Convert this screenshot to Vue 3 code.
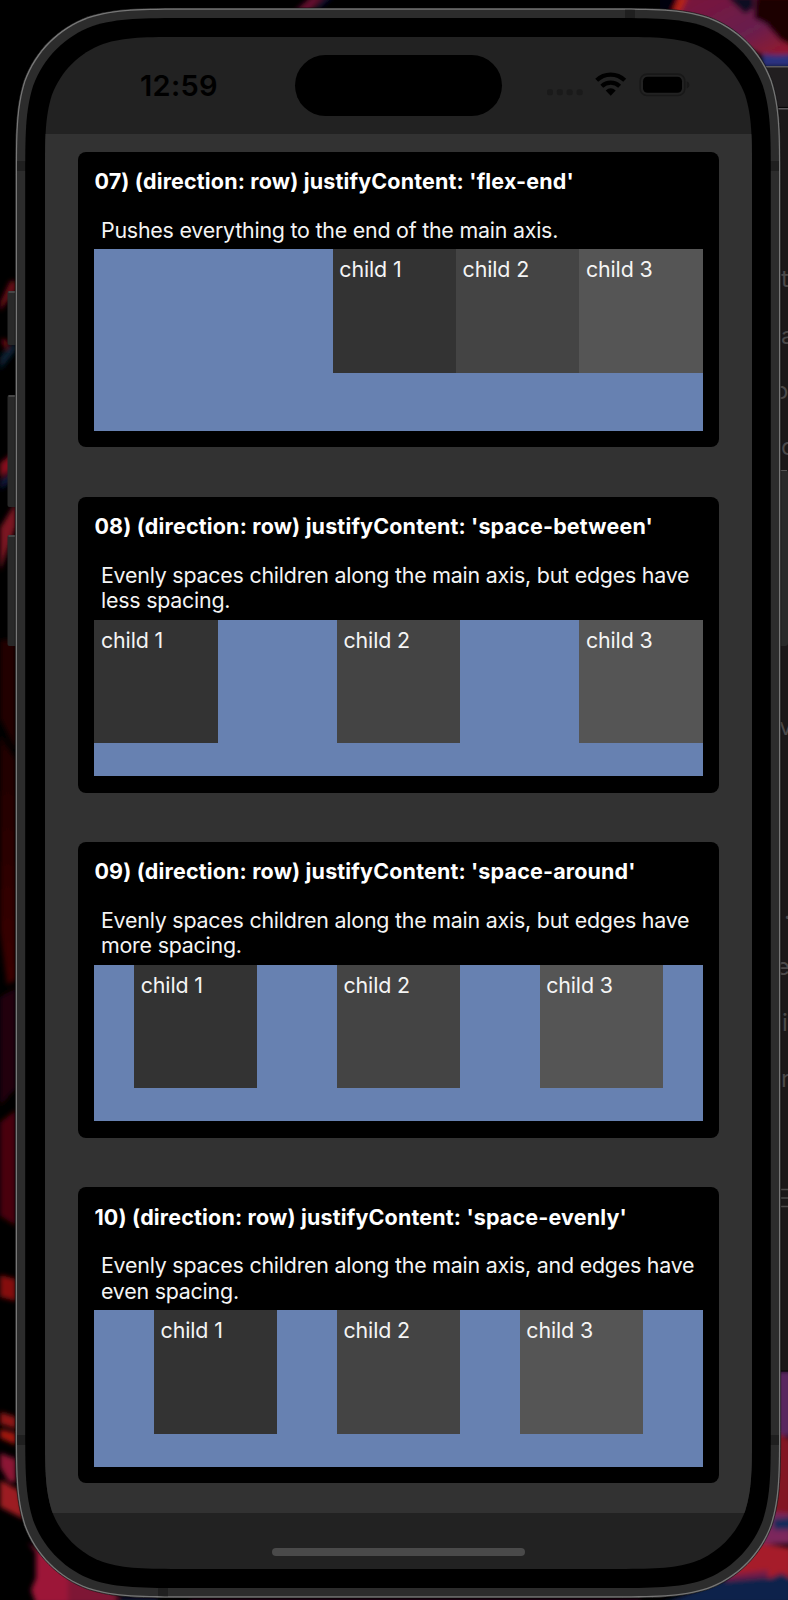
<script setup>
const examples = [
  { title: "07) (direction: row) justifyContent: 'flex-end'", lines: ['Pushes everything to the end of the main axis.'], justify: 'end' },
  { title: "08) (direction: row) justifyContent: 'space-between'", lines: ['Evenly spaces children along the main axis, but edges have', 'less spacing.'], justify: 'between' },
  { title: "09) (direction: row) justifyContent: 'space-around'", lines: ['Evenly spaces children along the main axis, but edges have', 'more spacing.'], justify: 'around' },
  { title: "10) (direction: row) justifyContent: 'space-evenly'", lines: ['Evenly spaces children along the main axis, and edges have', 'even spacing.'], justify: 'evenly' },
]

// Rectangle with continuous-curvature corners.
function smoothRect(x1, y1, x2, y2, r) {
  const a = 1.528665 * r, b = 1.088493 * r, c = 0.868407 * r
  const d = 0.631494 * r, e = 0.074911 * r, f = 0.372824 * r, g = 0.16906 * r
  return `M${x1 + a} ${y1}L${x2 - a} ${y1}` +
    `C${x2 - b} ${y1} ${x2 - c} ${y1} ${x2 - d} ${y1 + e}C${x2 - f} ${y1 + g} ${x2 - g} ${y1 + f} ${x2 - e} ${y1 + d}C${x2} ${y1 + c} ${x2} ${y1 + b} ${x2} ${y1 + a}` +
    `L${x2} ${y2 - a}C${x2} ${y2 - b} ${x2} ${y2 - c} ${x2 - e} ${y2 - d}C${x2 - g} ${y2 - f} ${x2 - f} ${y2 - g} ${x2 - d} ${y2 - e}C${x2 - c} ${y2} ${x2 - b} ${y2} ${x2 - a} ${y2}` +
    `L${x1 + a} ${y2}C${x1 + b} ${y2} ${x1 + c} ${y2} ${x1 + d} ${y2 - e}C${x1 + f} ${y2 - g} ${x1 + g} ${y2 - f} ${x1 + e} ${y2 - d}C${x1} ${y2 - c} ${x1} ${y2 - b} ${x1} ${y2 - a}` +
    `L${x1} ${y1 + a}C${x1} ${y1 + b} ${x1} ${y1 + c} ${x1 + e} ${y1 + d}C${x1 + g} ${y1 + f} ${x1 + f} ${y1 + g} ${x1 + d} ${y1 + e}C${x1 + c} ${y1} ${x1 + b} ${y1} ${x1 + a} ${y1}Z`
}
const outer = smoothRect(15.3, 8, 780.7, 1598, 115)
const body = smoothRect(17, 9.7, 779, 1596.3, 113.5)
const bezel = smoothRect(25.2, 18, 770.8, 1588, 107)
const glass = smoothRect(45, 37, 752, 1569, 92)
</script>

<template>
  <div class="desktop">
    <svg class="backdrop" width="788" height="1600" viewBox="0 0 788 1600" aria-hidden="true">
      <defs>
        <filter id="soft" x="-20%" y="-20%" width="140%" height="140%"><feGaussianBlur stdDeviation="2.4" /></filter>
        <linearGradient id="rose" x1="0" y1="0" x2="1" y2="1"><stop offset="0" stop-color="#7c1238" /><stop offset=".6" stop-color="#68204e" /><stop offset="1" stop-color="#a01523" /></linearGradient>
        <linearGradient id="ember" x1="0" y1="0" x2="0" y2="1"><stop offset="0" stop-color="#1e0002" /><stop offset=".5" stop-color="#2c0003" /><stop offset="1" stop-color="#3c0204" /></linearGradient>
        <clipPath id="glassClip"><path :d="glass" /></clipPath>
        <clipPath id="bodyClip"><path :d="body" /></clipPath>
      </defs>
      <rect width="788" height="1600" fill="#000" />
      <g filter="url(#soft)">
        <path d="M294 12L312 -4H325L309 12Z" fill="#64102f" />
        <path d="M312 12L326 -4H334L320 8Z" fill="#0b1036" />
        <path d="M674 -5H792V60H772L730 40L674 14Z" fill="url(#rose)" />
        <path d="M660 -5H678L674 12H660Z" fill="#050208" />
        <path d="M672 12L680 -4L688 -3L681 12Z" fill="#b62213" />
        <path d="M727 -4H754V8L745 14L733 3Z" fill="#070b20" />
        <path d="M756 -4H792V46L780 40L766 24L754 18Z" fill="#1c0203" />
        <path d="M762 54L776 55L792 54V67H762Z" fill="#2b3380" />
        <path d="M0 303L10 281H16V290L0 311Z" fill="#6a0a17" />
        <path d="M0 357L9 347L16 342V350L0 370Z" fill="#092034" />
        <path d="M1 339L8 341L6 350Z" fill="#920e19" />
        <path d="M0 463L16 451V468L0 477Z" fill="#86111e" />
        <path d="M0 480L16 469V478L0 490Z" fill="#0b1238" />
        <path d="M0 528L16 502V526L0 571Z" fill="#7b1520" />
        <path d="M0 640H16V750L0 718Z" fill="#240002" />
        <path d="M0 735L16 760V980L7 985L0 930Z" fill="url(#ember)" />
        <path d="M0 997L16 988V1088L0 1106Z" fill="#24020e" />
        <path d="M0 1122L16 1110V1226L0 1216Z" fill="#4a0407" />
        <path d="M0 1275L16 1279V1301L0 1297Z" fill="#850f0e" />
        <path d="M0 1412L16 1417V1429L0 1424Z" fill="#8f1619" />
        <path d="M0 1429L16 1433V1445L0 1438Z" fill="#a2180e" />
        <path d="M0 1453L16 1459V1482L9 1482L0 1467Z" fill="#8c1434" />
        <path d="M0 1480L19 1490L24 1519L0 1507Z" fill="#9c1a20" />
        <path d="M28 1543L35 1547L72 1567L119 1597L111 1604H36L31 1590L36 1578V1552Z" fill="#9c1839" />
        <path d="M68 1563L119 1596L115 1604H68Z" fill="#7e1735" />
        <path d="M119 1597H158V1604H119Z" fill="#0b1230" />
        <path d="M190 1599H640V1604H190Z" fill="#30051f" />
        <path d="M774 1371H792V1436H774Z" fill="#59285f" />
        <path d="M776 1432L792 1440V1514H771Z" fill="#821722" />
        <path d="M764 1511L792 1514V1544H760Z" fill="#7c285c" />
        <path d="M772 1519L792 1517V1530L774 1530Z" fill="#192b5a" />
        <path d="M754 1542L792 1548V1580L720 1576Z" fill="#a61e2a" />
        <path d="M726 1579L752 1575L770 1578L782 1573L792 1579V1604H660Z" fill="#10204c" />
        <path d="M728 1575L768 1570V1577L724 1581Z" fill="#721c46" />
      </g>
      <rect x="750" y="66" width="40" height="1305" fill="#1b1819" />
      <rect x="750" y="66" width="40" height="42" fill="#211e20" />
      <path d="M750 66.8H788M750 108.7H788" stroke="#5c595c" stroke-width="1.5" />
      <path d="M750 107.4H788M750 1371H788" stroke="#050505" stroke-width="1" />
      <rect x="760" y="470" width="28" height="176" rx="3" fill="#292a2a" />
      <path d="M770 470.5H787" stroke="#555" />
      <g class="behind">
        <text x="781" y="287">t</text><text x="781" y="344">a</text><text x="774" y="399">o</text><text x="781" y="455">c</text>
        <text x="779" y="735">v</text><text x="784" y="919">.</text><text x="776" y="975">e</text><text x="782" y="1031">i</text><text x="781" y="1087">r</text>
      </g>
      <path d="M781 1189.5H788M781 1198H788M781 1206.5H788" stroke="#4b494a" stroke-width="1.7" />

      <g fill="#292929">
        <rect x="7.5" y="291" width="14" height="54" rx="2" />
        <rect x="7.5" y="395" width="14" height="112" rx="2" />
        <rect x="7.5" y="535" width="14" height="111" rx="2" />
      </g>
      <path d="M8.5 292H15M8.5 396H15M8.5 536H15" stroke="#505050" stroke-width="1.4" />

      <path :d="outer" fill="#777" stroke="#050505" stroke-width=".6" />
      <path :d="body" fill="#2c2c2c" />
      <g clip-path="url(#bodyClip)" fill="#1f1f1f">
        <rect x="17" y="161" width="762" height="10" />
        <rect x="17" y="1435" width="762" height="10" />
        <rect x="625" y="9" width="10" height="12" />
        <rect x="158" y="1586" width="10" height="12" />
      </g>
      <path :d="bezel" fill="#000" />
      <g clip-path="url(#glassClip)">
        <rect x="45" y="37" width="707" height="1532" fill="#222" />
        <rect x="45" y="134" width="707" height="1379" fill="#323232" />
      </g>
    </svg>

    <main class="screen">
      <header class="status">
        <span class="time">12:59</span>
        <span class="island"></span>
        <span class="icons">
          <svg width="142" height="28" viewBox="0 0 142 28" aria-hidden="true">
            <g fill="#1a1a1a">
              <rect x="0" y="18.2" width="6" height="6" rx="2" /><rect x="9.8" y="18.2" width="6" height="6" rx="2" />
              <rect x="19.6" y="18.2" width="6" height="6" rx="2" /><rect x="29.6" y="18.2" width="6" height="6" rx="2" />
            </g>
            <g fill="none" stroke="#000" stroke-width="4.2">
              <path d="M49.7 9.3A20 20 0 0 1 77.7 9.3" />
              <path d="M54.8 15.2A13 13 0 0 1 72.6 15.2" />
            </g>
            <path d="M58.7 19.5Q63.7 15.2 68.7 19.5L63.7 24.8Z" fill="#000" />
            <rect x="93.2" y="3.1" width="44.6" height="21.4" rx="6.8" fill="none" stroke="#181818" stroke-width="1.6" />
            <rect x="96" y="5.8" width="39" height="16" rx="4.5" fill="#000" />
            <path d="M139.7 10.2Q142.5 11.3 142.5 14T139.7 17.6Z" fill="#181818" />
          </svg>
        </span>
      </header>

      <div class="list">
        <section v-for="ex in examples" :key="ex.title" class="card">
          <h2>{{ ex.title }}</h2>
          <p><span v-for="line in ex.lines" :key="line">{{ line }}</span></p>
          <div class="box" :class="ex.justify">
            <div v-for="n in 3" :key="n" class="child" :class="'tone' + n">child {{ n }}</div>
          </div>
        </section>
      </div>

      <footer><span class="indicator"></span></footer>
    </main>
  </div>
</template>

<style>
html, body { margin: 0; background: #000; }
</style>

<style scoped>
.desktop {
  position: relative;
  width: 788px;
  height: 1600px;
  overflow: hidden;
  box-sizing: border-box;
  padding: 37px 36px 31px 45px;
  font-family: Inter, "Liberation Sans", sans-serif;
}
.backdrop { position: absolute; inset: 0; display: block; }
.behind { fill: #4b494a; font-size: 24px; }
.screen { position: relative; width: 707px; height: 1532px; display: flex; flex-direction: column; }
.status {
  height: 97px;
  flex: none;
  box-sizing: border-box;
  padding: 18px 60px 0 94px;
  display: grid;
  grid-template-columns: 156px 207px 1fr;
  align-items: start;
}
.time { padding-left: 1px; font-size: 29px; line-height: 61px; font-weight: 600; letter-spacing: 0.3px; color: #000; white-space: nowrap; }
.island { height: 61px; border-radius: 31px; background: #000; }
.icons { padding: 15.5px 0 0 45px; height: 45px; }
.icons svg { display: block; overflow: visible; }
.list {
  flex: 1;
  min-height: 0;
  display: flex;
  flex-direction: column;
  gap: 49.4px;
  padding: 17.6px 33px 0;
}
.card {
  height: 295.8px;
  flex: none;
  box-sizing: border-box;
  padding: 16.4px;
  border-radius: 8px;
  background: #000;
  color: #f4f4f4;
  display: flex;
  flex-direction: column;
}
h2 { margin: 0; height: 42.8px; flex: none; font-size: 21.5px; line-height: 27px; font-weight: 700; letter-spacing: 0.16px; color: #fff; white-space: nowrap; }
p { margin: 0; padding: 6.8px 6.6px 6.4px; font-size: 21.4px; line-height: 25.4px; letter-spacing: -0.22px; white-space: nowrap; }
p span { display: block; }
.box { flex: 1; display: flex; align-items: flex-start; background: #6781b1; }
.end { justify-content: flex-end; }
.between { justify-content: space-between; }
.around { justify-content: space-around; }
.evenly { justify-content: space-evenly; }
.child { width: 123.3px; height: 123.3px; box-sizing: border-box; padding: 6.6px; font-size: 21.4px; line-height: 26.4px; letter-spacing: -0.12px; }
.tone1 { background: #333; }
.tone2 { background: #444; }
.tone3 { background: #555; }
footer { height: 56px; flex: none; display: flex; justify-content: center; align-items: flex-start; }
.indicator { width: 253px; height: 8.3px; margin-top: 34.5px; border-radius: 5px; background: #4a4a4a; }
</style>
